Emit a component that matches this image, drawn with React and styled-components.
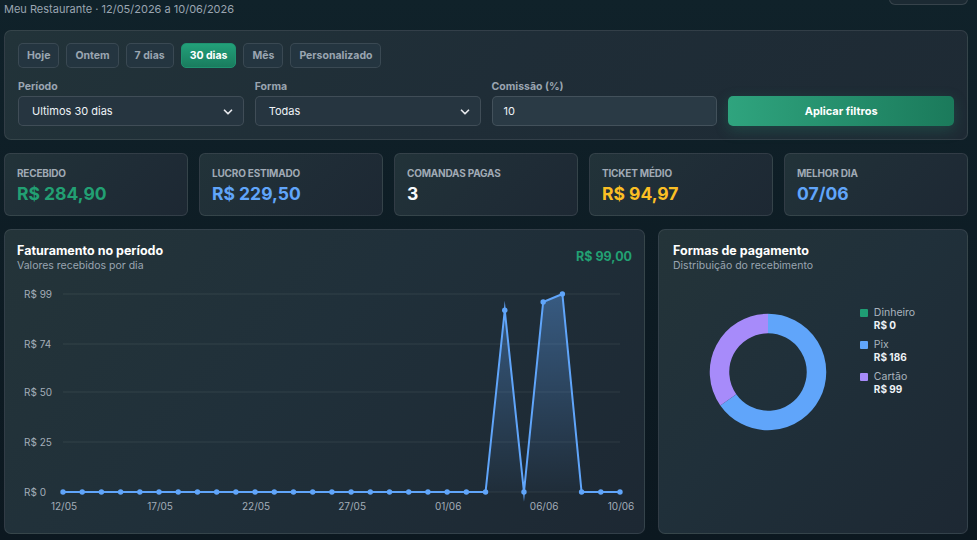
import React from 'react'
import styled, { createGlobalStyle } from 'styled-components'
import { ChevronDown, Download } from 'lucide-react'

const GlobalStyle = createGlobalStyle`
  html, body {
    margin: 0;
    padding: 0;
    height: 100%;
    overflow: hidden;
    background: linear-gradient(180deg, #10222a 0%, #0d1b23 60%, #0c1820 100%);
    font-family: Inter, "Noto Sans", "Liberation Sans", sans-serif;
    color: #e5e7eb;
  }
  * { box-sizing: border-box; }
`

const Page = styled.div`
  display: flex;
  flex-direction: column;
  gap: 13px;
  padding: 0 9px 0 4px;
`

const Header = styled.header`
  display: flex;
  justify-content: space-between;
  align-items: flex-start;
  height: 17px;
`

const PageSub = styled.div`
  padding-top: 2px;
  font-size: 11px;
  line-height: 14px;
  color: #9aa5b1;
`

// scrolled page: only the bottom of this header button is still visible
const GhostButton = styled.button`
  margin-top: -25px;
  height: 30px;
  width: 79px;
  border-radius: 6px;
  border: 1px solid rgba(255, 255, 255, 0.12);
  background: #1c2a33;
  color: #cbd5e1;
  display: flex;
  align-items: center;
  justify-content: center;
`

const Panel = styled.section`
  border: 1px solid rgba(255, 255, 255, 0.09);
  border-radius: 7px;
  background: linear-gradient(135deg, #223339 0%, #1f2d37 50%, #1e2a34 100%);
  padding: 12px 13px 13px;
`

const Presets = styled.div`
  display: flex;
  gap: 7px;
`

const Preset = styled.button`
  height: 25px;
  padding: 0 8px;
  border-radius: 5px;
  font: 700 10.5px Inter, sans-serif;
  color: ${p => (p.active ? '#ffffff' : '#9aa5b1')};
  border: 1px solid ${p => (p.active ? '#1f9270' : 'rgba(255,255,255,0.1)')};
  background: ${p => (p.active ? 'linear-gradient(180deg, #22a079, #1a7c5e)' : '#243540')};
`

const FilterGrid = styled.div`
  display: grid;
  grid-template-columns: repeat(4, 1fr);
  column-gap: 11px;
  margin-top: 12px;
  align-items: end;
`

const Field = styled.div`
  display: flex;
  flex-direction: column;
  gap: 2px;
`

const Label = styled.label`
  font-size: 10.5px;
  line-height: 14px;
  font-weight: 700;
  color: #9aa5b1;
`

const SelectBox = styled.div`
  position: relative;
  height: 30px;
  display: flex;
  align-items: center;
  padding: 0 13px;
  border-radius: 5px;
  border: 1px solid rgba(255, 255, 255, 0.12);
  background: #263540;
  font-size: 11px;
  color: #eef2f6;
  svg {
    position: absolute;
    right: 8px;
    top: 8px;
  }
`

const TextInput = styled.div`
  height: 30px;
  display: flex;
  align-items: center;
  padding: 0 11px;
  border-radius: 5px;
  border: 1px solid rgba(255, 255, 255, 0.12);
  background: #2a3a45;
  font-size: 11px;
  color: #eef2f6;
`

const ApplyButton = styled.button`
  height: 30px;
  border: none;
  border-radius: 5px;
  background: linear-gradient(90deg, #2fa47e 0%, #1b7a5b 100%);
  box-shadow: 0 4px 14px rgba(34, 160, 121, 0.25);
  color: #ffffff;
  font: 700 11px Inter, sans-serif;
`

const KpiRow = styled.div`
  display: grid;
  grid-template-columns: repeat(5, 1fr);
  gap: 11px;
`

const KpiCard = styled.div`
  height: 63px;
  border: 1px solid rgba(255, 255, 255, 0.09);
  border-radius: 6px;
  background: linear-gradient(135deg, #223339 0%, #1f2c36 60%, #1d2833 100%);
  padding: 13px 12px 0;
  display: flex;
  flex-direction: column;
  gap: 3px;
`

const KpiLabel = styled.div`
  font-size: 10px;
  line-height: 13px;
  font-weight: 700;
  letter-spacing: -0.2px;
  color: #a0aab5;
  text-transform: uppercase;
`

const KpiValue = styled.div`
  font-size: 17.5px;
  line-height: 21px;
  font-weight: 700;
  color: ${p => p.color};
`

const ChartsRow = styled.div`
  display: grid;
  grid-template-columns: minmax(0, 1fr) 310px;
  gap: 13px;
`

const ChartCard = styled.div`
  height: 305px;
  border: 1px solid rgba(255, 255, 255, 0.09);
  border-radius: 7px;
  background: linear-gradient(135deg, #243439 0%, #20303a 45%, #1d2833 100%);
  padding: 12px ${p => p.padRight || 12}px 0 ${p => p.padLeft || 12}px;
  display: flex;
  flex-direction: column;
`

const CardHead = styled.div`
  display: flex;
  justify-content: space-between;
  align-items: flex-start;
`

const CardTitle = styled.div`
  font-size: 12.5px;
  line-height: 17px;
  font-weight: 700;
  color: #ffffff;
`

const CardSub = styled.div`
  font-size: 10.5px;
  line-height: 13px;
  color: #9aa5b1;
`

const Highlight = styled.div`
  margin-top: 7px;
  font-size: 12.5px;
  font-weight: 700;
  color: #22a073;
`

const ChartSvg = styled.svg`
  display: block;
  margin-top: 9px;
  overflow: visible;
`

const DonutArea = styled.div`
  display: flex;
  justify-content: center;
  align-items: flex-start;
  gap: 33px;
  padding-top: 41px;
`

const Legend = styled.ul`
  list-style: none;
  margin: -7px 0 0;
  padding: 0;
  display: flex;
  flex-direction: column;
  gap: 6px;
`

const LegendItem = styled.li`
  display: grid;
  grid-template-columns: 8px auto;
  column-gap: 6px;
  align-items: center;
`

const Swatch = styled.span`
  width: 8px;
  height: 8px;
  border-radius: 1px;
  background: ${p => p.color};
`

const LegendName = styled.span`
  font-size: 10.5px;
  line-height: 13px;
  color: #aab4be;
`

const LegendValue = styled.span`
  grid-column: 2;
  font-size: 10px;
  line-height: 13px;
  font-weight: 700;
  color: #eef2f6;
`

const presets = ['Hoje', 'Ontem', '7 dias', '30 dias', 'Mês', 'Personalizado']

const kpis = [
  { label: 'Recebido', value: 'R$ 284,90', color: '#22a073' },
  { label: 'Lucro estimado', value: 'R$ 229,50', color: '#60a5fa' },
  { label: 'Comandas pagas', value: '3', color: '#f8fafc' },
  { label: 'Ticket médio', value: 'R$ 94,97', color: '#fbbf24' },
  { label: 'Melhor dia', value: '07/06', color: '#60a5fa' },
]

// 12/05 .. 10/06
const values = Array.from({ length: 30 }, () => 0)
values[23] = 90.9
values[25] = 95
values[26] = 99

const dayLabel = i => {
  const d = new Date(2026, 4, 12 + i)
  return String(d.getDate()).padStart(2, '0') + '/' + String(d.getMonth() + 1).padStart(2, '0')
}

const W = 617
const H = 238
const X0 = 46
const X1 = 603
const Y0 = 211
const Y99 = 13
const px = i => X0 + (i * (X1 - X0)) / 29
const py = v => Y0 - (v / 99) * (Y0 - Y99)

const RevenueChart = () => {
  const pts = values.map((v, i) => [px(i), py(v)])
  const line = pts.map(p => p.join(',')).join(' ')
  const area = `M${X0},${Y0} L` + pts.map(p => p.join(',')).join(' L') + ` L${X1},${Y0} Z`
  const ticks = [99, 74, 50, 25, 0]
  const xticks = [0, 5, 10, 15, 20, 25, 29]
  return (
    <ChartSvg width={W} height={H} viewBox={`0 0 ${W} ${H}`}>
      <defs>
        <linearGradient id="fillBlue" x1="0" y1="0" x2="0" y2="1">
          <stop offset="0%" stopColor="#60a5fa" stopOpacity="0.38" />
          <stop offset="100%" stopColor="#60a5fa" stopOpacity="0.02" />
        </linearGradient>
      </defs>
      {ticks.map(t => (
        <g key={t}>
          <line x1={X0} x2={X1} y1={py(t)} y2={py(t)} stroke="rgba(255,255,255,0.08)" strokeWidth="1" />
          <text x="7" y={py(t) + 4} fill="#a3adb8" fontSize="10" fontFamily="Inter, sans-serif">R$ {t}</text>
        </g>
      ))}
      {xticks.map(i => (
        <text key={i} x={px(i) + 1} y={Y0 + 18} fill="#a3adb8" fontSize="10" textAnchor="middle" fontFamily="Inter, sans-serif">
          {dayLabel(i)}
        </text>
      ))}
      <path d={area} fill="url(#fillBlue)" />
      <polyline points={line} fill="none" stroke="#60a5fa" strokeWidth="2" strokeLinejoin="miter" strokeMiterlimit="10" />
      {pts.map(([x, y], i) => (
        <circle key={i} cx={x} cy={y} r="2.7" fill="#60a5fa" />
      ))}
    </ChartSvg>
  )
}

const arc = (cx, cy, r, a0, a1) => {
  const rad = a => ((a - 90) * Math.PI) / 180
  const x0 = cx + r * Math.cos(rad(a0))
  const y0 = cy + r * Math.sin(rad(a0))
  const x1 = cx + r * Math.cos(rad(a1))
  const y1 = cy + r * Math.sin(rad(a1))
  const large = a1 - a0 > 180 ? 1 : 0
  return `M${x0},${y0} A${r},${r} 0 ${large} 1 ${x1},${y1}`
}

const payments = [
  { name: 'Dinheiro', value: 0, color: '#1f9d74' },
  { name: 'Pix', value: 186, color: '#60a5fa' },
  { name: 'Cartão', value: 99, color: '#a78bfa' },
]

const Donut = () => {
  const total = payments.reduce((s, p) => s + p.value, 0)
  let start = 0
  return (
    <svg width="118" height="118" viewBox="0 0 118 118">
      {payments.filter(p => p.value > 0).map(p => {
        const sweep = (p.value / total) * 360
        const d = arc(59, 59, 48.5, start, start + sweep)
        start += sweep
        return <path key={p.name} d={d} fill="none" stroke={p.color} strokeWidth="19.5" />
      })}
    </svg>
  )
}

export default function App() {
  return (
    <>
      <GlobalStyle />
      <Page>
        <Header>
          <PageSub>Meu Restaurante · 12/05/2026 a 10/06/2026</PageSub>
          <GhostButton aria-label="Exportar"><Download size={14} /></GhostButton>
        </Header>

        <Panel>
          <Presets>
            {presets.map(p => (
              <Preset key={p} active={p === '30 dias'}>{p}</Preset>
            ))}
          </Presets>
          <FilterGrid>
            <Field>
              <Label>Período</Label>
              <SelectBox>Ultimos 30 dias<ChevronDown size={14} strokeWidth={3} color="#e5e7eb" /></SelectBox>
            </Field>
            <Field>
              <Label>Forma</Label>
              <SelectBox>Todas<ChevronDown size={14} strokeWidth={3} color="#e5e7eb" /></SelectBox>
            </Field>
            <Field>
              <Label>Comissão (%)</Label>
              <TextInput>10</TextInput>
            </Field>
            <ApplyButton>Aplicar filtros</ApplyButton>
          </FilterGrid>
        </Panel>

        <KpiRow>
          {kpis.map(k => (
            <KpiCard key={k.label}>
              <KpiLabel>{k.label}</KpiLabel>
              <KpiValue color={k.color}>{k.value}</KpiValue>
            </KpiCard>
          ))}
        </KpiRow>

        <ChartsRow>
          <ChartCard>
            <CardHead>
              <div>
                <CardTitle>Faturamento no período</CardTitle>
                <CardSub>Valores recebidos por dia</CardSub>
              </div>
              <Highlight>R$ 99,00</Highlight>
            </CardHead>
            <RevenueChart />
          </ChartCard>

          <ChartCard padLeft={14} padRight={16}>
            <CardTitle>Formas de pagamento</CardTitle>
            <CardSub>Distribuição do recebimento</CardSub>
            <DonutArea>
              <Donut />
              <Legend>
                {payments.map(p => (
                  <LegendItem key={p.name}>
                    <Swatch color={p.color} />
                    <LegendName>{p.name}</LegendName>
                    <LegendValue>R$ {p.value}</LegendValue>
                  </LegendItem>
                ))}
              </Legend>
            </DonutArea>
          </ChartCard>
        </ChartsRow>
      </Page>
    </>
  )
}
